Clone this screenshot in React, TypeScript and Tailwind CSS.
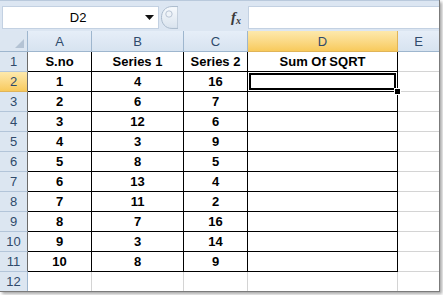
import React from "react";

const cols = ["A", "B", "C", "D", "E"];

const rows = [
  ["S.no", "Series 1", "Series 2", "Sum Of SQRT"],
  ["1", "4", "16", ""],
  ["2", "6", "7", ""],
  ["3", "12", "6", ""],
  ["4", "3", "9", ""],
  ["5", "8", "5", ""],
  ["6", "13", "4", ""],
  ["7", "11", "2", ""],
  ["8", "7", "16", ""],
  ["9", "3", "14", ""],
  ["10", "8", "9", ""],
];

const font = { fontFamily: '"Liberation Sans", Arial, sans-serif' };

const FormulaBar: React.FC = () => (
  <div className="h-[31px] bg-[#dce6f2] border-t border-[#b9c9dc] flex pt-[5px]">
    {/* name box */}
    <div className="ml-[2px] w-[158px] h-[23px] bg-white border border-[#c3d1e2] flex items-center">
      <span className="flex-1 text-center text-[13px] text-black leading-none pl-[8px]">D2</span>
      <svg width="9" height="5" viewBox="0 0 9 5" className="mr-[4px]">
        <path d="M0 0 H9 L4.5 5 Z" fill="#111" />
      </svg>
    </div>
    {/* grip */}
    <svg width="17" height="23" viewBox="0 0 17 23" className="ml-[2px]">
      <defs>
        <linearGradient id="grip" x1="0" y1="0" x2="0" y2="1">
          <stop offset="0" stopColor="#f7fafd" />
          <stop offset="1" stopColor="#d9e3ee" />
        </linearGradient>
      </defs>
      <path d="M17 0.5 H11 C4 0.5 0.5 6 0.5 11.5 C0.5 17 4 22.5 11 22.5 H17 Z" fill="url(#grip)" stroke="#a9b9cc" />
      <circle cx="8" cy="8" r="3.2" fill="#eef3f8" stroke="#b7c4d4" />
    </svg>
    <div className="w-[70px] h-[23px] flex items-center justify-end pr-[7px]">
      <span
        className="text-[15px] italic font-bold text-[#3a3a3a] leading-none"
        style={{ fontFamily: '"Liberation Serif", "Times New Roman", serif' }}
      >
        f<span className="text-[10px] relative top-[2px]">x</span>
      </span>
    </div>
    <div className="w-[192px] h-[23px] bg-white border-l border-t border-b border-[#c3d1e2]" />
  </div>
);

const App: React.FC = () => {
  return (
    <div className="w-[443px] h-[295px] bg-white overflow-hidden" style={font}>
      <div className="w-[440px] h-[292px] border-r border-b border-[#7b7b7b] shadow-[2px_2px_3px_rgba(0,0,0,0.35)] bg-white">
        <FormulaBar />

        <div className="grid grid-cols-[28px_64px_92px_64px_150px_41px] grid-rows-[21px_repeat(11,20px)_19px]">
          {/* corner */}
          <div className="bg-[#dce6f1] border-r border-b border-[#9eb6ce] relative">
            <svg width="9" height="9" viewBox="0 0 9 9" className="absolute right-[3px] bottom-[3px]">
              <path d="M9 0 V9 H0 Z" fill="#b4c3d4" />
            </svg>
          </div>
          {cols.map((c, i) =>
            c === "D" ? (
              <div
                key={c}
                className="bg-gradient-to-b from-[#fde9ac] to-[#f8ca5b] border-r border-b border-[#e0b458] flex items-center justify-center text-[13px] text-[#2f4a6b] leading-none"
              >
                {c}
              </div>
            ) : (
              <div
                key={c}
                className={
                  i < 4
                    ? "bg-gradient-to-b from-[#e6eef8] to-[#d7e3f0] border-r border-b border-r-[#9eb6ce] border-b-[#9eb6ce] flex items-center justify-center text-[13px] text-[#2f4a6b] leading-none"
                    : "bg-gradient-to-b from-[#e6eef8] to-[#d7e3f0] border-b border-[#9eb6ce] flex items-center justify-center text-[13px] text-[#2f4a6b] leading-none"
                }
              >
                {c}
              </div>
            )
          )}

          {rows.map((r, ri) => (
            <React.Fragment key={ri}>
              <div
                className={
                  ri === 1
                    ? "bg-gradient-to-b from-[#fde9ac] to-[#f8ca5b] border-r border-b border-r-[#6a6a6a] border-b-[#e0b458] flex items-center justify-center text-[13px] text-[#2f4a6b] leading-none"
                    : "bg-[#dce6f1] border-r border-b border-r-[#6a6a6a] border-b-[#b3c5d9] flex items-center justify-center text-[13px] text-[#2f4a6b] leading-none"
                }
              >
                {ri + 1}
              </div>
              {r.map((v, ci) => (
                <div
                  key={ci}
                  className="relative border-r border-b border-black flex items-center justify-center text-[13px] font-bold text-black leading-none"
                >
                  {v}
                  {ri === 1 && ci === 3 && (
                    <>
                      <div className="absolute inset-[1px] border-2 border-black pointer-events-none" />
                      <div className="absolute -right-[4px] -bottom-[4px] w-[7px] h-[7px] bg-black border border-white z-10" />
                    </>
                  )}
                </div>
              ))}
              <div className="border-b border-[#d4d4d4]" />
            </React.Fragment>
          ))}

          {/* row 12 */}
          <div className="bg-[#dce6f1] border-r border-[#9eb6ce] flex items-center justify-center text-[13px] text-[#2f4a6b] leading-none">
            12
          </div>
          <div className="border-r border-[#d4d4d4]" />
          <div className="border-r border-[#d4d4d4]" />
          <div className="border-r border-[#d4d4d4]" />
          <div className="border-r border-[#d4d4d4]" />
          <div />
        </div>
      </div>
    </div>
  );
};

export default App;
